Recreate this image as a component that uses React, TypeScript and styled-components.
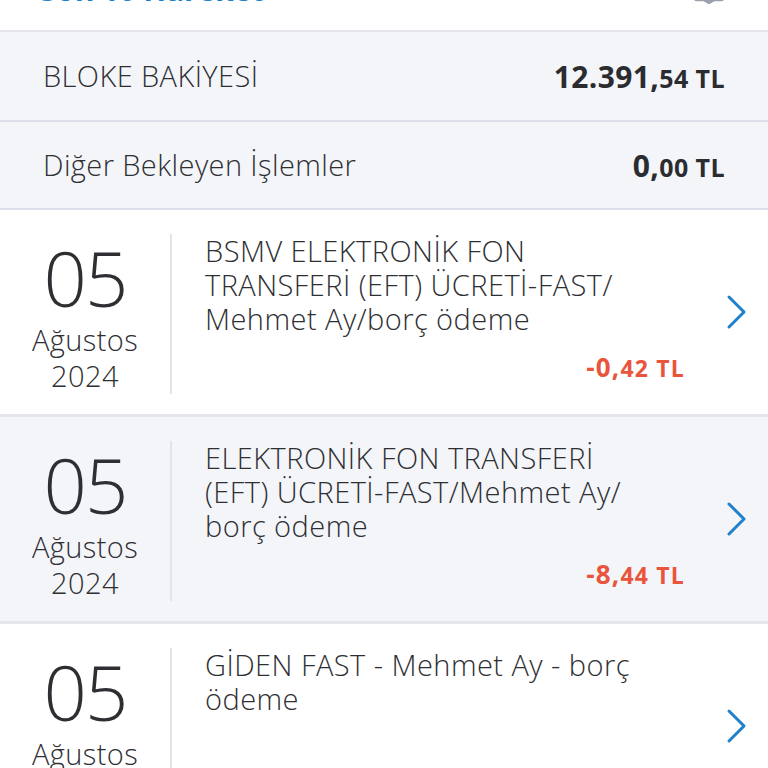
import React from "react";
import styled, { createGlobalStyle } from "styled-components";

const GlobalStyle = createGlobalStyle`
  html, body {
    margin: 0;
    padding: 0;
    background: #ffffff;
  }
  body {
    font-family: "Open Sans", "Noto Sans", "DejaVu Sans", sans-serif;
    color: #2e2f33;
    -webkit-font-smoothing: antialiased;
  }
`;

type Tx = {
  day: string;
  month: string;
  year: string;
  lines: string[];
  main: string;
  decimals: string;
};

const transactions: Tx[] = [
  {
    day: "05",
    month: "Ağustos",
    year: "2024",
    lines: ["BSMV ELEKTRONİK FON", "TRANSFERİ (EFT) ÜCRETİ-FAST/", "Mehmet Ay/borç ödeme"],
    main: "-0,",
    decimals: "42",
  },
  {
    day: "05",
    month: "Ağustos",
    year: "2024",
    lines: ["ELEKTRONİK FON TRANSFERİ", "(EFT) ÜCRETİ-FAST/Mehmet Ay/", "borç ödeme"],
    main: "-8,",
    decimals: "44",
  },
  {
    day: "05",
    month: "Ağustos",
    year: "2024",
    lines: ["GİDEN FAST - Mehmet Ay - borç", "ödeme"],
    main: "-2.000,",
    decimals: "00",
  },
];

const Page = styled.div`
  width: 768px;
  height: 768px;
  overflow: hidden;
  display: flex;
  flex-direction: column;
`;

const Header = styled.div`
  height: 30px;
  flex-shrink: 0;
  display: flex;
  align-items: flex-start;
  justify-content: space-between;
  padding: 0 42px 0 40px;
  overflow: hidden;
  border-bottom: 2px solid #e4e6ec;
  background: #ffffff;
`;

const Title = styled.h2`
  margin: -28px 0 0;
  font-size: 30px;
  line-height: 36px;
  font-weight: 700;
  color: #1b7fcb;
  letter-spacing: -0.2px;
`;

const HeaderIcon = styled.svg`
  margin-top: -24px;
  width: 34px;
  height: 28px;
`;

const SummaryRow = styled.div<{ $tall?: boolean }>`
  height: ${({ $tall }) => ($tall ? "88px" : "86px")};
  flex-shrink: 0;
  display: flex;
  align-items: center;
  justify-content: space-between;
  padding: 0 43px;
  background: #f4f5f9;
  border-bottom: 2px solid #dcdfe9;
`;

const SummaryLabel = styled.span`
  font-size: 29px;
  font-weight: 300;
  letter-spacing: 0.4px;
  color: #2e2f33;
  margin-top: -2px;
`;

const Money = styled.span<{ $tone?: "dark" | "red"; $size?: "lg" | "md" }>`
  font-weight: 700;
  white-space: nowrap;
  letter-spacing: ${({ $size }) => ($size === "md" ? "1.2px" : "0.4px")};
  color: ${({ $tone }) => ($tone === "red" ? "#e9553c" : "#2b2c30")};
  font-size: ${({ $size }) => ($size === "md" ? "26px" : "30px")};
`;

const Small = styled.span<{ $size?: "lg" | "md" }>`
  font-size: ${({ $size }) => ($size === "md" ? "23px" : "25px")};
`;

const Card = styled.div<{ $shaded: boolean }>`
  flex-shrink: 0;
  display: grid;
  grid-template-columns: 172px 1fr 68px;
  min-height: 204px;
  background: ${({ $shaded }) => ($shaded ? "#f4f5f9" : "#ffffff")};
  border-bottom: 3px solid #e4e6ec;
`;

const DateCol = styled.div`
  display: flex;
  flex-direction: column;
  align-items: center;
  justify-content: flex-start;
  margin: 24px 0 20px;
  border-right: 2px solid #e2e4ea;
  color: #2e2f33;
`;

const Day = styled.div`
  font-size: 76px;
  font-weight: 300;
  line-height: 88px;
  letter-spacing: -2px;
`;

const DateText = styled.div`
  font-size: 29px;
  font-weight: 300;
  line-height: 36px;
  letter-spacing: 0.4px;
`;

const Body = styled.div`
  display: flex;
  flex-direction: column;
  justify-content: space-between;
  padding: 24px 15px 28px 33px;
`;

const Description = styled.div`
  font-size: 29px;
  font-weight: 300;
  line-height: 34px;
  letter-spacing: 0.45px;
  color: #2e2f33;
`;

const AmountLine = styled.div`
  text-align: right;
  line-height: 30px;
`;

const ChevronCol = styled.div`
  display: flex;
  align-items: center;
  padding-left: 26px;
`;

const Chevron = () => (
  <svg width="22" height="36" viewBox="0 0 22 36" fill="none">
    <polyline
      points="3,3 18,18 3,33"
      stroke="#1f80cc"
      strokeWidth="3"
      strokeLinecap="round"
      strokeLinejoin="round"
    />
  </svg>
);

export default function App() {
  return (
    <>
      <GlobalStyle />
      <Page>
        <Header>
          <Title>Son 10 Hareket</Title>
          <HeaderIcon viewBox="0 0 34 28" fill="none">
            <rect x="2" y="4" width="30" height="20" rx="3" stroke="#9aa0ab" strokeWidth="2.5" />
            <path d="M12 24 L17 27 L22 24" stroke="#9aa0ab" strokeWidth="2.5" />
          </HeaderIcon>
        </Header>

        <SummaryRow $tall>
          <SummaryLabel>BLOKE BAKİYESİ</SummaryLabel>
          <Money>
            12.391,<Small>54 TL</Small>
          </Money>
        </SummaryRow>

        <SummaryRow>
          <SummaryLabel>Diğer Bekleyen İşlemler</SummaryLabel>
          <Money>
            0,<Small>00 TL</Small>
          </Money>
        </SummaryRow>

        {transactions.map((tx, i) => (
          <Card key={i} $shaded={i % 2 === 1}>
            <DateCol>
              <Day>{tx.day}</Day>
              <DateText>{tx.month}</DateText>
              <DateText>{tx.year}</DateText>
            </DateCol>
            <Body>
              <Description>
                {tx.lines.map((line, j) => (
                  <div key={j}>{line}</div>
                ))}
              </Description>
              <AmountLine>
                <Money $tone="red" $size="md">
                  {tx.main}
                  <Small $size="md">{tx.decimals} TL</Small>
                </Money>
              </AmountLine>
            </Body>
            <ChevronCol>
              <Chevron />
            </ChevronCol>
          </Card>
        ))}
      </Page>
    </>
  );
}
